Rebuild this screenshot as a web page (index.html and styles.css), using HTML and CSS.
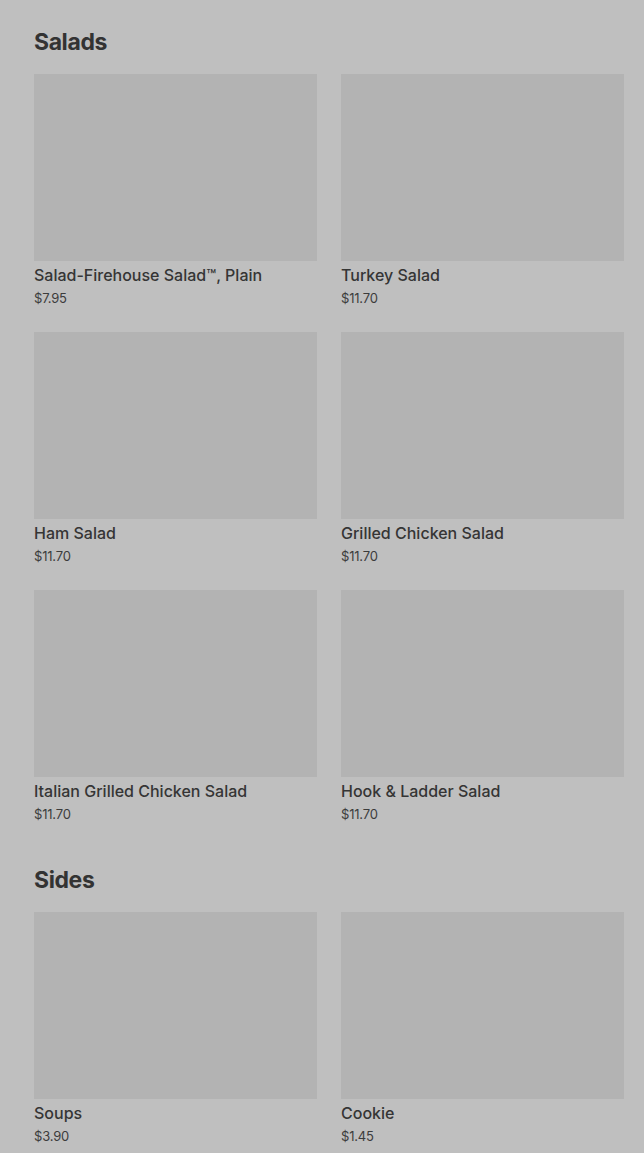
FILE: index.html
```html
<!DOCTYPE html>
<html>
<head>
    <title>Menu</title>
    <link rel="stylesheet" href="styles.css">
</head>
<body>
    <div class="menu">
        <section class="category">
            <h2>Salads</h2>
            <div class="grid">
                <div class="item">
                    <div class="thumb"></div>
                    <div class="name">Salad-Firehouse Salad™, Plain</div>
                    <div class="price">$7.95</div>
                </div>
                <div class="item">
                    <div class="thumb"></div>
                    <div class="name">Turkey Salad</div>
                    <div class="price">$11.70</div>
                </div>
                <div class="item">
                    <div class="thumb"></div>
                    <div class="name">Ham Salad</div>
                    <div class="price">$11.70</div>
                </div>
                <div class="item">
                    <div class="thumb"></div>
                    <div class="name">Grilled Chicken Salad</div>
                    <div class="price">$11.70</div>
                </div>
                <div class="item">
                    <div class="thumb"></div>
                    <div class="name">Italian Grilled Chicken Salad</div>
                    <div class="price">$11.70</div>
                </div>
                <div class="item">
                    <div class="thumb"></div>
                    <div class="name">Hook &amp; Ladder Salad</div>
                    <div class="price">$11.70</div>
                </div>
            </div>
        </section>

        <section class="category">
            <h2>Sides</h2>
            <div class="grid">
                <div class="item">
                    <div class="thumb"></div>
                    <div class="name">Soups</div>
                    <div class="price">$3.90</div>
                </div>
                <div class="item">
                    <div class="thumb"></div>
                    <div class="name">Cookie</div>
                    <div class="price">$1.45</div>
                </div>
            </div>
        </section>
    </div>
</body>
</html>
```

FILE: styles.css
```css
/* Page */
body {
    margin: 0;
    background-color: #bfbfbf;
    color: #333;
    font-family: Inter, "Noto Sans", sans-serif;
}

.menu {
    padding: 26px 20px 0 34px;
}

/* Category block */
.category {
    margin-bottom: 40px;
}

.category h2 {
    margin: 0 0 16px;
    font-size: 23px;
    line-height: 32px;
    font-weight: 700;
    letter-spacing: -0.4px;
    color: #333;
}

/* Item grid */
.grid {
    display: grid;
    grid-template-columns: 283px 283px;
    column-gap: 24px;
    row-gap: 24px;
}

.thumb {
    height: 187px;
    background-color: #b3b3b3;
}

.name {
    margin-top: 4px;
    font-size: 16px;
    line-height: 20px;
    font-weight: 500;
    color: #353535;
}

.price {
    margin-top: 3px;
    font-size: 13px;
    line-height: 20px;
    color: #3c3c3c;
    letter-spacing: -0.2px;
}
```
